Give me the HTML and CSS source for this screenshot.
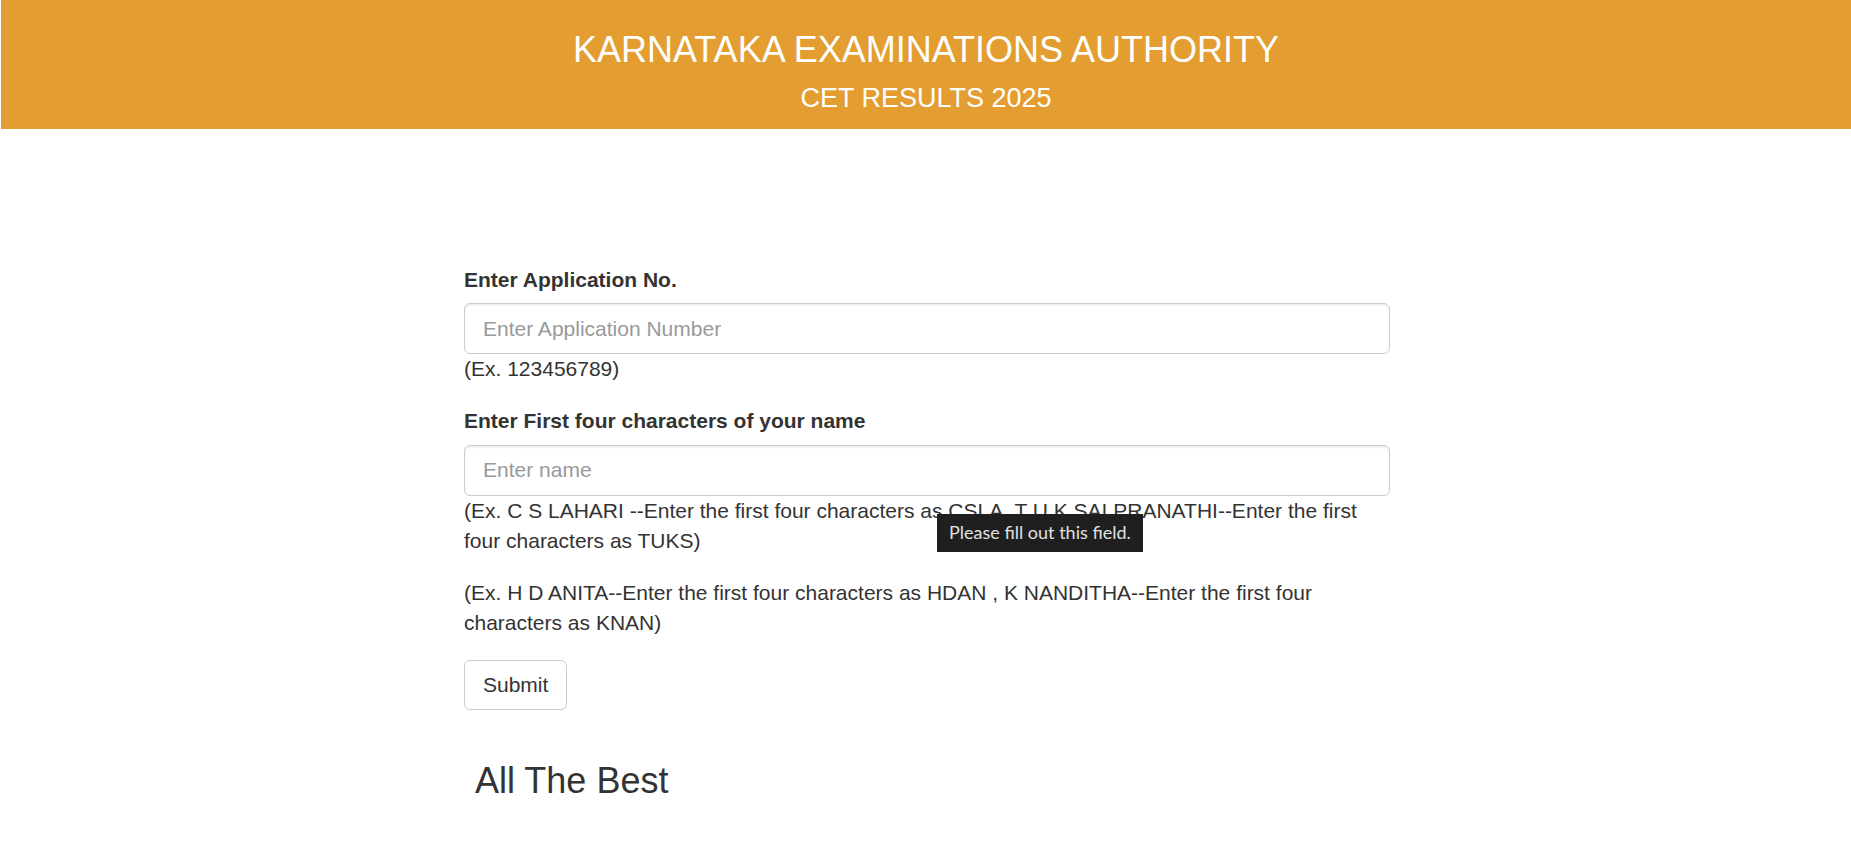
FILE: index.html
```html
<!DOCTYPE html>
<html lang="en">
<head>
<meta charset="utf-8">
<title>CET Results 2025</title>
<link rel="stylesheet" href="styles.css">
</head>
<body>
<header class="banner">
  <h3 class="banner-title">KARNATAKA EXAMINATIONS AUTHORITY</h3>
  <h4 class="banner-sub">CET RESULTS 2025</h4>
</header>
<main class="main">
  <form class="result-form" onsubmit="return false">
    <div class="form-group">
      <label class="field-label" for="appno">Enter Application No.</label>
      <input class="field-input" id="appno" type="text" placeholder="Enter Application Number">
      <div class="hint">(Ex. 123456789)</div>
    </div>
    <div class="form-group">
      <label class="field-label" for="name">Enter First four characters of your name</label>
      <div class="name-field">
        <input class="field-input" id="name" type="text" placeholder="Enter name">
        <div class="tooltip">Please fill out this field.</div>
      </div>
      <p class="hint hint-block">(Ex. C S LAHARI --Enter the first four characters as CSLA, T U K SAI PRANATHI--Enter the first four characters as TUKS)</p>
      <p class="hint hint-block hint-second">(Ex. H D ANITA--Enter the first four characters as HDAN , K NANDITHA--Enter the first four characters as KNAN)</p>
    </div>
    <button class="submit-btn" type="submit">Submit</button>
  </form>
  <h3 class="wish">All The Best</h3>
</main>
</body>
</html>
```

FILE: styles.css
```css
html, body {
  margin: 0;
  padding: 0;
  background: #fff;
}

body {
  font-family: "Liberation Sans", Arial, Helvetica, sans-serif;
  font-size: 21px;
  line-height: 30px;
  color: #333;
}

.banner {
  margin-left: 1px;
  height: 128.5px;
  overflow: hidden;
  background: #e39d30;
  color: #fff;
  text-align: center;
}

.banner-title {
  margin: 30px 0 0;
  font-size: 36px;
  font-weight: 400;
  line-height: 39.6px;
}

.banner-sub {
  margin: 14.5px 0 0;
  font-size: 27px;
  font-weight: 400;
  line-height: 29.7px;
}

.main {
  width: 926px;
  margin: 136px 0 0 calc(50% - 461.5px);
}

.result-form {
  margin: 0;
}

.form-group {
  margin-bottom: 22px;
}

.field-label {
  display: block;
  font-weight: 700;
  margin-bottom: 8.6px;
}

.name-field {
  position: relative;
}

.field-input {
  display: block;
  width: 100%;
  height: 51px;
  box-sizing: border-box;
  padding: 9px 18px;
  font-family: "Liberation Sans", Arial, Helvetica, sans-serif;
  font-size: 21px;
  color: #555;
  background: #fff;
  border: 1.5px solid #ccc;
  border-radius: 6px;
  box-shadow: inset 0 1.5px 1.5px rgba(0, 0, 0, 0.075);
  outline: none;
}

.field-input::placeholder {
  color: #999;
}

.hint {
  margin: 0;
}

.hint-second {
  margin-top: 22.6px;
}

.tooltip {
  position: absolute;
  top: calc(100% + 18.3px);
  left: 472.5px;
  width: 206px;
  height: 37.7px;
  box-sizing: border-box;
  padding-left: 12.6px;
  background: #1f1f1f;
  color: #e0e0e0;
  font-family: Lato, "Open Sans", sans-serif;
  font-size: 18px;
  line-height: 37.7px;
  white-space: nowrap;
  z-index: 5;
}

.submit-btn {
  display: block;
  height: 50px;
  padding: 0 18px;
  font-family: "Liberation Sans", Arial, Helvetica, sans-serif;
  font-size: 21px;
  color: #333;
  background: #fff;
  border: 1.5px solid #ccc;
  border-radius: 6px;
  cursor: pointer;
}

.wish {
  margin: 50.4px 0 0 11px;
  font-size: 36px;
  font-weight: 400;
  line-height: 39.6px;
}
```
